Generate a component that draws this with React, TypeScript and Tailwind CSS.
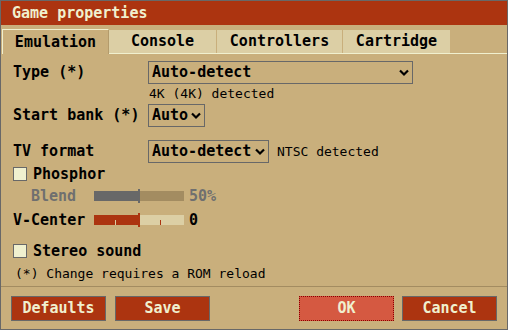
import React from 'react';

const font = { fontFamily: '"DejaVu Sans Mono", "Liberation Mono", monospace' };

function Chevron() {
  return (
    <svg width="10" height="8" viewBox="0 0 10 8" className="shrink-0">
      <path d="M1 1.5 L5 5.5 L9 1.5" fill="none" stroke="#000" strokeWidth="2.2" />
    </svg>
  );
}

function Select({ label, width }: { label: string; width: string }) {
  return (
    <div className={`${width} h-[23px] border border-[#686868] flex items-center justify-between pl-[3px] pr-[3px] font-bold text-[15px] text-black`}>
      <span>{label}</span>
      <Chevron />
    </div>
  );
}

function Checkbox({ label }: { label: string }) {
  return (
    <div className="flex items-center h-[16px]">
      <div className="w-[14px] h-[14px] bg-[#f0f0cf] border border-[#686868]" />
      <span className="ml-[6px] font-bold text-[15px] text-black">{label}</span>
    </div>
  );
}

function Slider({ fill, rest, ticks }: { fill: string; rest: string; ticks?: boolean }) {
  return (
    <div className="relative w-[90px] h-[10px] flex">
      <div className={`w-[44px] h-full ${fill}`} />
      <div className={`flex-1 h-full ${rest}`} />
      <div className={`absolute left-[44px] top-[-2px] w-[2px] h-[14px] ${fill}`} />
      {ticks && (
        <>
          <div className="absolute left-[21px] top-[5px] w-[1px] h-[5px] bg-[#dccfa5]" />
          <div className="absolute left-[66px] top-[5px] w-[1px] h-[5px] bg-[#ac3410]" />
        </>
      )}
    </div>
  );
}

function Button({ label, focused }: { label: string; focused?: boolean }) {
  return (
    <div
      className={
        focused
          ? 'w-[95px] h-[25px] bg-[#d55941] border border-dotted border-[#8b0000] flex items-center justify-center font-bold text-[15px] text-[#f0f0cf]'
          : 'w-[95px] h-[25px] bg-[#ac3410] border border-[#686868] flex items-center justify-center font-bold text-[15px] text-[#f0f0cf]'
      }
    >
      {label}
    </div>
  );
}

export default function App() {
  return (
    <div style={font} className="w-[508px] h-[330px] border border-[#686868] bg-[#c9af7c] flex flex-col leading-none">
      <div className="h-[24px] bg-[#ac3410] flex items-center pl-[11px] font-bold text-[15px] text-[#f0f0cf]">
        Game properties
      </div>

      {/* tabs */}
      <div className="mt-[4px] flex items-end pl-[1px] h-[25px]">
        <div className="w-[107px] h-[25px] border-t border-l border-r border-t-[#f0f0cf] border-l-[#f0f0cf] border-r-[#b39b6c] flex items-center justify-center font-bold text-[15px] text-black">
          Emulation
        </div>
        <div className="flex-1 flex items-end h-[24px] border-b border-[#f0f0cf]">
          <div className="w-[108px] h-[23px] bg-[#dccfa5] border-r border-[#c9af7c] flex items-center justify-center font-bold text-[15px] text-black">
            Console
          </div>
          <div className="w-[126px] h-[23px] bg-[#dccfa5] border-r border-[#c9af7c] flex items-center justify-center font-bold text-[15px] text-black">
            Controllers
          </div>
          <div className="w-[107px] h-[23px] bg-[#dccfa5] flex items-center justify-center font-bold text-[15px] text-black">
            Cartridge
          </div>
        </div>
      </div>

      <div className="px-[12px] flex flex-col">
        <div className="mt-[7px] flex items-center h-[23px]">
          <span className="w-[135px] font-bold text-[15px] text-black">Type (*)</span>
          <Select label="Auto-detect" width="w-[265px]" />
        </div>
        <div className="mt-[1px] h-[16px] flex items-center pl-[136px] text-[13px] text-black">
          4K (4K) detected
        </div>
        <div className="mt-[3px] flex items-center h-[23px]">
          <span className="w-[135px] font-bold text-[15px] text-black">Start bank (*)</span>
          <Select label="Auto" width="w-[57px]" />
        </div>
        <div className="mt-[13px] flex items-center h-[23px]">
          <span className="w-[135px] font-bold text-[15px] text-black">TV format</span>
          <Select label="Auto-detect" width="w-[121px]" />
          <span className="ml-[8px] text-[13px] text-black">NTSC detected</span>
        </div>
        <div className="mt-[3px]">
          <Checkbox label="Phosphor" />
        </div>
        <div className="mt-[6px] flex items-center h-[16px]">
          <span className="ml-[18px] w-[63px] font-bold text-[15px] text-[#6f6f6f]">Blend</span>
          <Slider fill="bg-[#686868]" rest="bg-[#a38c61]" />
          <span className="ml-[5px] font-bold text-[15px] text-[#6f6f6f]">50%</span>
        </div>
        <div className="mt-[8px] flex items-center h-[16px]">
          <span className="w-[81px] font-bold text-[15px] text-black">V-Center</span>
          <Slider fill="bg-[#ac3410]" rest="bg-[#dccfa5]" ticks />
          <span className="ml-[5px] font-bold text-[15px] text-black">0</span>
        </div>
        <div className="mt-[15px]">
          <Checkbox label="Stereo sound" />
        </div>
        <div className="mt-[6px] h-[16px] flex items-center ml-[2px] text-[13px] text-black">
          (*) Change requires a ROM reload
        </div>
      </div>

      <div className="mt-[5px] h-[1px] bg-[#a38c61]" />

      <div className="mt-[9px] px-[10px] flex items-center">
        <div className="flex gap-[9px]">
          <Button label="Defaults" />
          <Button label="Save" />
        </div>
        <div className="ml-auto flex gap-[8px]">
          <Button label="OK" focused />
          <Button label="Cancel" />
        </div>
      </div>
    </div>
  );
}
